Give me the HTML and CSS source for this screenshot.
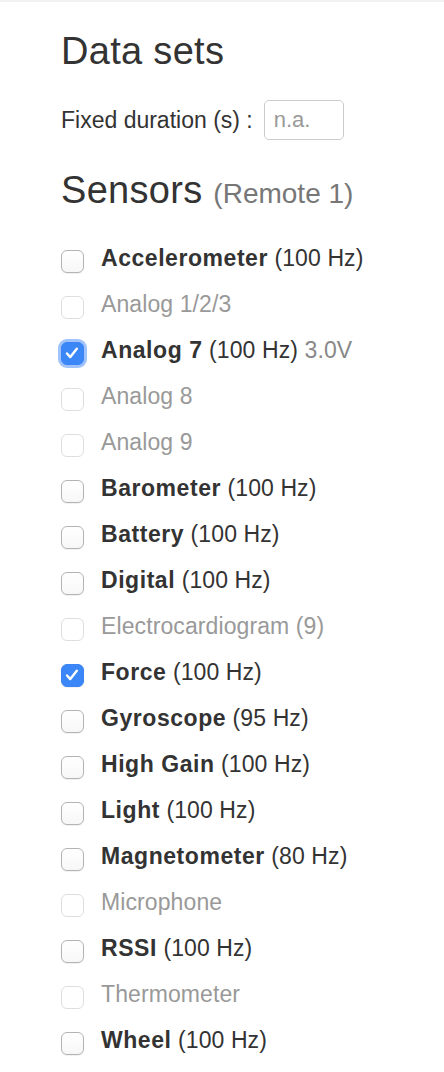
FILE: index.html
```html
<!DOCTYPE html>
<html>
<head>
<meta charset="utf-8">
<link rel="stylesheet" href="styles.css">
</head>
<body>
<div class="topbar"></div>
<main class="panel">
  <h1 class="title">Data sets</h1>
  <div class="duration">
    <span class="duration-label">Fixed duration (s) :</span>
    <input class="duration-input" type="text" placeholder="n.a.">
  </div>
  <h2 class="title sensors">Sensors <span class="remote">(Remote 1)</span></h2>
  <ul class="sensor-list">
    <li class="row"><span class="box"></span><span class="label"><b>Accelerometer</b> (100 Hz)</span></li>
    <li class="row disabled"><span class="box"></span><span class="label">Analog 1/2/3</span></li>
    <li class="row"><span class="box checked focus"><svg viewBox="0 0 22 22" width="22" height="22"><path d="M6 11.5l3.3 3.6L15.8 6.8" fill="none" stroke="#fff" stroke-width="2.4" stroke-linecap="round" stroke-linejoin="round"/></svg></span><span class="label"><b>Analog 7</b> (100 Hz) <span class="volt">3.0V</span></span></li>
    <li class="row disabled"><span class="box"></span><span class="label">Analog 8</span></li>
    <li class="row disabled"><span class="box"></span><span class="label">Analog 9</span></li>
    <li class="row"><span class="box"></span><span class="label"><b>Barometer</b> (100 Hz)</span></li>
    <li class="row"><span class="box"></span><span class="label"><b>Battery</b> (100 Hz)</span></li>
    <li class="row"><span class="box"></span><span class="label"><b>Digital</b> (100 Hz)</span></li>
    <li class="row disabled"><span class="box"></span><span class="label">Electrocardiogram (9)</span></li>
    <li class="row"><span class="box checked"><svg viewBox="0 0 22 22" width="22" height="22"><path d="M6 11.5l3.3 3.6L15.8 6.8" fill="none" stroke="#fff" stroke-width="2.4" stroke-linecap="round" stroke-linejoin="round"/></svg></span><span class="label"><b>Force</b> (100 Hz)</span></li>
    <li class="row"><span class="box"></span><span class="label"><b>Gyroscope</b> (95 Hz)</span></li>
    <li class="row"><span class="box"></span><span class="label"><b>High Gain</b> (100 Hz)</span></li>
    <li class="row"><span class="box"></span><span class="label"><b>Light</b> (100 Hz)</span></li>
    <li class="row"><span class="box"></span><span class="label"><b>Magnetometer</b> (80 Hz)</span></li>
    <li class="row disabled"><span class="box"></span><span class="label">Microphone</span></li>
    <li class="row"><span class="box"></span><span class="label"><b>RSSI</b> (100 Hz)</span></li>
    <li class="row disabled"><span class="box"></span><span class="label">Thermometer</span></li>
    <li class="row"><span class="box"></span><span class="label"><b>Wheel</b> (100 Hz)</span></li>
  </ul>
</main>
</body>
</html>
```

FILE: styles.css
```css
html, body {
  margin: 0;
  padding: 0;
  background: #fff;
}

body {
  font-family: "Liberation Sans", Arial, sans-serif;
  color: #333;
}

.topbar {
  height: 2px;
  background: #f1f1f1;
}

.panel {
  padding: 27px 0 0 61px;
}

.title {
  margin: 0;
  font-size: 38px;
  line-height: 44px;
  font-weight: normal;
  color: #333;
  letter-spacing: 0.3px;
}

.duration {
  display: flex;
  align-items: center;
  gap: 11px;
  margin-top: 27px;
  height: 40px;
  font-size: 23px;
}

.duration-input {
  box-sizing: border-box;
  width: 80px;
  height: 40px;
  border: 1px solid #ccc;
  border-radius: 5px;
  padding: 0 0 0 9px;
  font-family: "Liberation Sans", Arial, sans-serif;
  font-size: 22px;
  color: #333;
  outline: none;
}

.duration-input::placeholder {
  color: #999;
}

.sensors {
  margin-top: 28px;
}

.remote {
  font-size: 28px;
  color: #777;
  letter-spacing: 0;
}

.sensor-list {
  list-style: none;
  margin: 19px 0 0 0;
  padding: 0;
}

.row {
  display: flex;
  align-items: center;
  height: 46px;
  font-size: 23px;
  letter-spacing: 0.1px;
}

.row b {
  letter-spacing: 0.55px;
}

.box {
  box-sizing: border-box;
  flex: none;
  width: 23px;
  height: 23px;
  margin-top: 6px;
  margin-right: 17px;
  border: 1px solid #b3b3b3;
  border-radius: 6px;
  background: linear-gradient(#fff, #f7f7f7);
  box-shadow: 0 1px 1px rgba(0, 0, 0, 0.06);
  display: flex;
}

.box svg {
  margin: -1px;
}

.box.checked {
  border-color: #3a84f5;
  background: #3b87f7;
}

.box.focus {
  box-shadow: 0 0 0 3px rgba(80, 145, 245, 0.55);
}

.disabled {
  color: #999;
}

.disabled .box {
  border-color: #dedede;
  background: #fff;
  box-shadow: none;
}

.volt {
  color: #888;
}
```
